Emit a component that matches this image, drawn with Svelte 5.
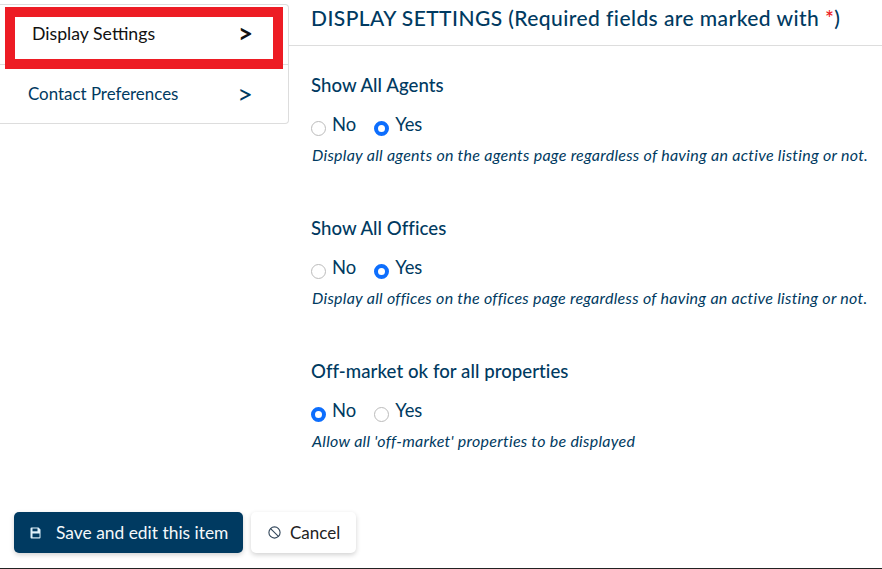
<script>
	const settings = [
		{ title: 'Show All Agents', value: 'yes', hint: 'Display all agents on the agents page regardless of having an active listing or not.' },
		{ title: 'Show All Offices', value: 'yes', hint: 'Display all offices on the offices page regardless of having an active listing or not.' },
		{ title: 'Off-market ok for all properties', value: 'no', hint: "Allow all 'off-market' properties to be displayed" }
	];
</script>

<div class="page">
	<div class="top">
		<aside class="side">
			<nav class="card">
				<a class="item first">Display Settings <span class="gt">&gt;</span></a>
				<a class="item second">Contact Preferences <span class="gt">&gt;</span></a>
			</nav>
			<div class="mark"></div>
		</aside>

		<main class="main">
			<h1>DISPLAY SETTINGS (Required fields are marked with <span class="req">*</span>)</h1>
			<div class="fields">
				{#each settings as s}
					<section class="field">
						<h2>{s.title}</h2>
						<div class="radios">
							<span class="opt"><i class="radio" class:on={s.value === 'no'}></i><span>No</span></span>
							<span class="opt"><i class="radio" class:on={s.value === 'yes'}></i><span>Yes</span></span>
						</div>
						<p>{s.hint}</p>
					</section>
				{/each}
			</div>
		</main>
	</div>

	<div class="actions">
		<button class="btn save">
			<svg width="12" height="12" viewBox="0 0 12 12" fill="none">
				<path d="M0.5 1.5a1 1 0 0 1 1-1h7l2 2v8a1 1 0 0 1-1 1h-8a1 1 0 0 1-1-1z" fill="#dff1fb" />
				<rect x="2.5" y="1.5" width="5" height="2.8" fill="#003a61" />
				<rect x="2.5" y="6.5" width="7" height="3.8" fill="#003a61" />
			</svg>
			Save and edit this item
		</button>
		<button class="btn cancel">
			<svg width="13" height="13" viewBox="0 0 13 13" fill="none" stroke="#33475b" stroke-width="1.1">
				<circle cx="6.5" cy="6.5" r="5.6" />
				<path d="M2.6 2.6l7.8 7.8" />
			</svg>
			Cancel
		</button>
	</div>
</div>

<style>
	:global(body) { background: #fff; }
	.page { width: 882px; height: 569px; box-sizing: border-box; border-bottom: 1px solid #222; font-family: Lato, "Open Sans", sans-serif; color: #003a61; overflow: hidden; }
	.top { display: flex; height: 512px; }
	.side { position: relative; width: 289px; padding-top: 4px; box-sizing: border-box; flex-shrink: 0; }
	.card { border: 1px solid #ddd; border-left: none; border-radius: 0 4px 4px 0; height: 120px; box-sizing: border-box; }
	.item { display: flex; justify-content: space-between; align-items: center; height: 59px; box-sizing: border-box; padding-right: 35px; }
	.first { color: #111; font-size: 17.7px; padding-left: 32px; padding-bottom: 2px; border-bottom: 1px solid #ddd; height: 60px; }
	.second { font-size: 16.9px; padding-left: 28px; padding-bottom: 3px; }
	.gt { font-size: 27px; line-height: 27px; }
	.first .gt { font-weight: 700; color: #111; font-size: 26px; }
	.mark { position: absolute; left: 5px; top: 7px; width: 278px; height: 62px; box-sizing: border-box; border: 10px solid #ed1c24; pointer-events: none; }
	.main { flex: 1; min-width: 0; }
	h1 { margin: 0; height: 46px; box-sizing: border-box; border-bottom: 1px solid #ddd; padding: 5px 0 0 22px; font-size: 21px; line-height: 26px; font-weight: 500; letter-spacing: 0.43px; white-space: nowrap; }
	.req { color: #ed1c24; }
	.fields { padding: 28px 0 0 22px; display: flex; flex-direction: column; }
	.field { height: 143px; }
	h2 { margin: 0; font-size: 18.6px; line-height: 22px; font-weight: 500; letter-spacing: 0.05px; }
	.radios { display: flex; gap: 18px; margin-top: 17px; height: 24px; font-size: 18.4px; line-height: 22px; }
	.opt { display: flex; gap: 6px; }
	.radio { width: 15px; height: 15px; box-sizing: border-box; margin-top: 8px; border-radius: 50%; border: 1px solid #bbb; background: #fff; }
	.radio.on { border: 4.5px solid #0d6efd; }
	p { margin: 8px 0 0 1px; font-size: 16px; line-height: 20px; font-style: italic; letter-spacing: 0.27px; white-space: nowrap; }
	.actions { display: flex; gap: 8px; padding-left: 14px; }
	.btn { height: 41px; border: none; border-radius: 5px; font: inherit; font-size: 17.4px; display: flex; align-items: center; box-shadow: 0 2px 5px rgba(0, 0, 0, 0.18); }
	.save { width: 229px; background: #003a61; color: #f4f8fb; padding: 0 0 0 16px; gap: 14px; }
	.cancel { width: 105px; background: #fff; color: #222; padding: 0 0 0 17px; gap: 9px; font-size: 17px; }
</style>
